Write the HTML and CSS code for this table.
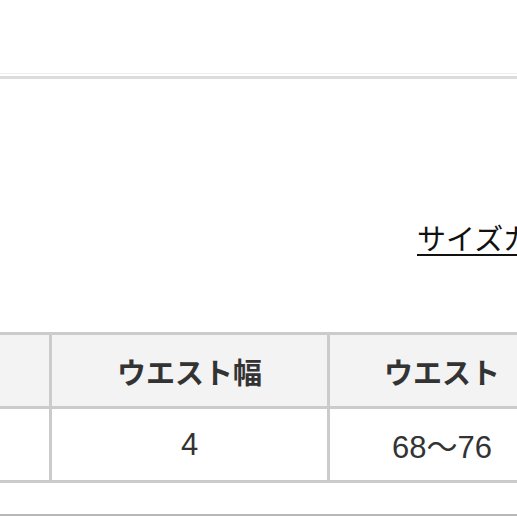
FILE: index.html
```html
<!DOCTYPE html>
<html lang="ja">
<head>
<meta charset="utf-8">
<link rel="stylesheet" href="styles.css">
</head>
<body>
<div class="page">
  <header class="topbar"></header>
  <div class="bar"></div>
  <section class="content">
    <div class="guide-row"><a class="guide" href="#">サイズガイド</a></div>
    <table class="sizes">
      <colgroup>
        <col class="c-wide"><col class="c-wide"><col class="c-narrow">
      </colgroup>
      <thead>
        <tr><th>サイズ</th><th>ウエスト幅</th><th>ウエスト</th></tr>
      </thead>
      <tbody>
        <tr><td>M</td><td>4</td><td>68〜76</td></tr>
      </tbody>
    </table>
    <div class="rule"></div>
  </section>
</div>
</body>
</html>
```
FILE: styles.css
```css
html, body {
  margin: 0;
  padding: 0;
  background: #fff;
}
body {
  overflow: hidden;
  width: 517px;
  height: 517px;
  font-family: "Noto Sans CJK JP", "Noto Sans", sans-serif;
  color: #333;
}
.page {
  width: 517px;
}
.topbar {
  height: 73px;
  border-bottom: 1px solid #efefef;
}
.bar {
  margin-top: 2px;
  height: 3px;
  background: #dcdcdc;
}
.content {
  padding-top: 144px;
}
.guide-row {
  padding-left: 417px;
  white-space: nowrap;
  height: 29px;
  line-height: 29px;
}
.guide {
  font-size: 29px;
  color: #111;
  text-decoration: underline;
  text-decoration-thickness: 2px;
  text-underline-offset: 4px;
}
.sizes {
  margin-top: 80px;
  margin-left: -229px;
  width: 786px;
  min-width: 786px;
  border-collapse: collapse;
  table-layout: fixed;
}
.c-wide {
  width: 278px;
}
.c-narrow {
  width: 227px;
}
.sizes th, .sizes td {
  height: 71px;
  border: 3px solid #cbcbcb;
  text-align: center;
  vertical-align: middle;
  padding: 0;
  white-space: nowrap;
}
.sizes th {
  background: #f3f3f3;
  font-family: "Noto Sans CJK JP", sans-serif;
  font-size: 29px;
  font-weight: bold;
  color: #333;
}
.sizes td {
  background: #fff;
  font-family: "Liberation Sans", "Noto Sans CJK JP", sans-serif;
  font-size: 31px;
  font-weight: normal;
  color: #333;
}
.rule {
  margin-top: 31px;
  margin-left: -10px;
  width: 560px;
  height: 2px;
  background: #b8b8b8;
}
```
